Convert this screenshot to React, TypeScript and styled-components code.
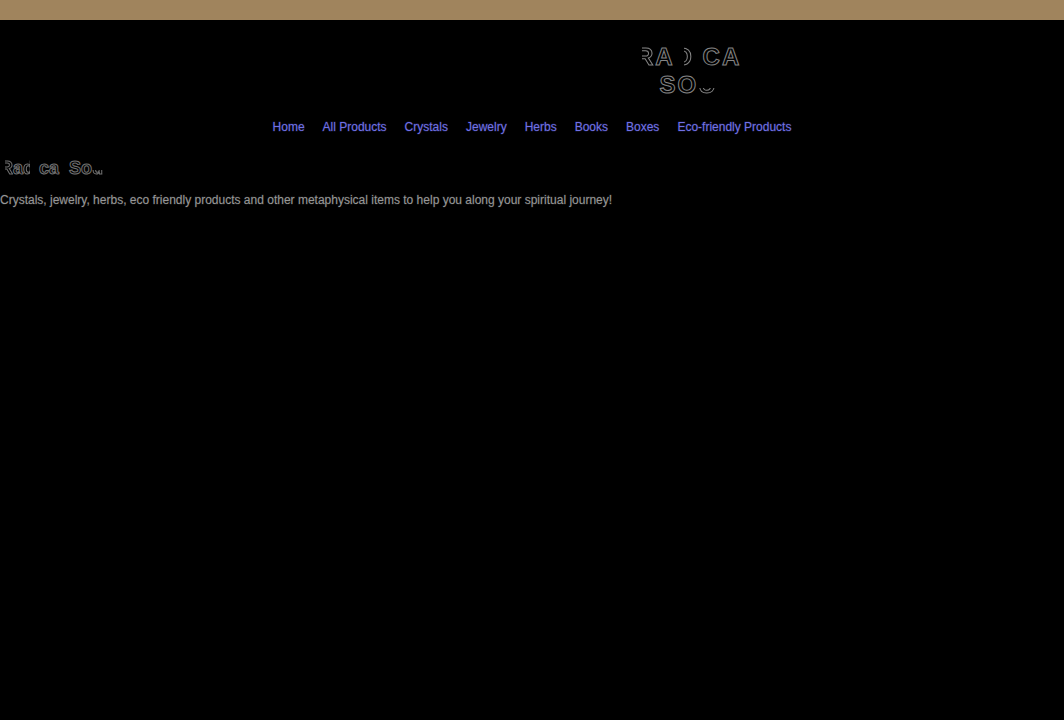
import React from "react";
import styled, { createGlobalStyle } from "styled-components";

const Global = createGlobalStyle`
  html { background: #000; }
  body {
    margin: 0;
    background: #000;
    color: #959595;
    font-family: "Liberation Sans", Arial, sans-serif;
    font-size: 12px;
    line-height: 16px;
  }
`;

const Announcement = styled.div`
  height: 20px;
  background: #a0845d;
`;

const Header = styled.header`
  display: flex;
  justify-content: center;
  padding: 23px 0 0 31%;
`;

const Logo = styled.a`
  color: #000;
  font-size: 24px;
  font-weight: 700;
  line-height: 28px;
  letter-spacing: 2px;
  text-align: center;
  text-decoration: none;
`;

const LogoLine = styled.span`
  display: block;
`;

/* Hollow letters. */
const Outline = styled.span<{ $tone: string }>`
  color: #000;
  -webkit-text-stroke: 1px ${(p) => p.$tone};
`;

/* Hollow letter of which only one part is visible. */
const Partial = styled(Outline)<{ $from: string }>`
  display: inline-block;
  -webkit-mask-image: linear-gradient(${(p) => p.$from});
  mask-image: linear-gradient(${(p) => p.$from});
`;

const Nav = styled.nav`
  padding: 20px 8px 0;
`;

const NavList = styled.ul`
  display: flex;
  flex-wrap: wrap;
  justify-content: center;
  gap: 0 18px;
  margin: 0;
  padding: 0;
  list-style: none;
`;

const NavLink = styled.a`
  color: #7777dd;
  text-decoration: none;
  -webkit-text-stroke: 1px #6060ff40;
`;

const Title = styled.h1`
  margin: 22px 0 0;
  font-size: 18px;
  line-height: 22px;
`;

const Intro = styled.p`
  margin: 13px 0 0;
  -webkit-text-stroke: 1px #a0a0a030;
`;

const links = [
  "Home",
  "All Products",
  "Crystals",
  "Jewelry",
  "Herbs",
  "Books",
  "Boxes",
  "Eco-friendly Products",
];

const logoTone = "#858585";
const titleTone = "#707070";
const hidden = "#000";

export default function App() {
  return (
    <>
      <Global />
      <Announcement />
      <Header>
        <Logo href="#" aria-label="Radical Soul">
          <LogoLine>
            <Partial $tone={logoTone} $from="90deg, transparent 30%, #000 30%">R</Partial>
            <Outline $tone={logoTone}>A</Outline>
            <Partial $tone={logoTone} $from="90deg, transparent 45%, #000 45%">D</Partial>
            <Outline $tone={hidden}>I</Outline>
            <Outline $tone={logoTone}>CA</Outline>
            <Outline $tone={hidden}>L</Outline>
          </LogoLine>
          <LogoLine>
            <Outline $tone={logoTone}>SO</Outline>
            <Partial $tone={logoTone} $from="180deg, transparent 60%, #000 60%">U</Partial>
            <Outline $tone={hidden}>L</Outline>
          </LogoLine>
        </Logo>
      </Header>
      <Nav aria-label="Main">
        <NavList>
          {links.map((label) => (
            <li key={label}>
              <NavLink href="#">{label}</NavLink>
            </li>
          ))}
        </NavList>
      </Nav>
      <main>
        <Title>
          <Partial $tone={titleTone} $from="90deg, transparent 40%, #000 40%">R</Partial>
          <Outline $tone={titleTone}>a</Outline>
          <Partial $tone={titleTone} $from="90deg, #000 60%, transparent 60%">d</Partial>
          <Outline $tone={hidden}>i</Outline>
          <Outline $tone={titleTone}>ca</Outline>
          <Outline $tone={hidden}>l</Outline> <Outline $tone={titleTone}>So</Outline>
          <Partial $tone={titleTone} $from="180deg, transparent 60%, #000 60%">u</Partial>
          <Outline $tone={hidden}>l</Outline>
        </Title>
        <Intro>
          Crystals, jewelry, herbs, eco friendly products and other metaphysical
          items to help you along your spiritual journey!
        </Intro>
      </main>
    </>
  );
}
